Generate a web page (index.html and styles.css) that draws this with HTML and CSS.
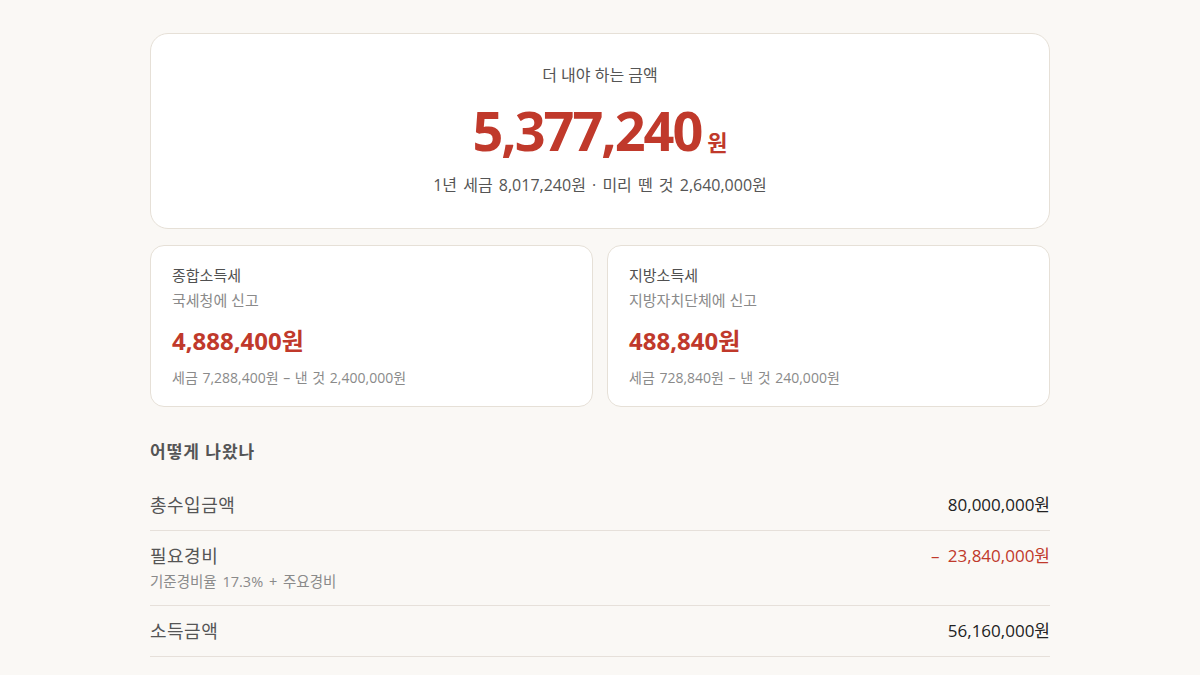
FILE: index.html
```html
<!DOCTYPE html>
<html lang="ko">
<head>
<meta charset="utf-8">
<link rel="stylesheet" href="styles.css">
</head>
<body>
<main class="page">
  <section class="hero">
    <div class="hero-label">더 내야 하는 금액</div>
    <div class="hero-amount"><span class="hero-num">5,377,240</span><span class="hero-unit">원</span></div>
    <div class="hero-sub">1년 세금 8,017,240원 · 미리 뗀 것 2,640,000원</div>
  </section>

  <section class="cards">
    <div class="card">
      <div class="card-title">종합소득세</div>
      <div class="card-sub">국세청에 신고</div>
      <div class="card-amount">4,888,400원</div>
      <div class="card-detail">세금 7,288,400원 – 낸 것 2,400,000원</div>
    </div>
    <div class="card">
      <div class="card-title">지방소득세</div>
      <div class="card-sub">지방자치단체에 신고</div>
      <div class="card-amount">488,840원</div>
      <div class="card-detail">세금 728,840원 – 낸 것 240,000원</div>
    </div>
  </section>

  <h2 class="section-title">어떻게 나왔나</h2>
  <ul class="rows">
    <li class="row">
      <div class="row-left"><div class="row-label">총수입금액</div></div>
      <div class="row-value">80,000,000원</div>
    </li>
    <li class="row">
      <div class="row-left">
        <div class="row-label">필요경비</div>
        <div class="row-note">기준경비율 17.3% + 주요경비</div>
      </div>
      <div class="row-value minus">– 23,840,000원</div>
    </li>
    <li class="row">
      <div class="row-left"><div class="row-label">소득금액</div></div>
      <div class="row-value">56,160,000원</div>
    </li>
  </ul>
</main>
</body>
</html>
```

FILE: styles.css
```css
* { box-sizing: border-box; }
html, body { margin: 0; padding: 0; }
body {
  background: #faf8f5;
  font-family: "Open Sans", "Noto Sans CJK KR", sans-serif;
  color: #444;
}
.page {
  width: 900px;
  margin: 0 auto;
  padding-top: 33px;
}
.hero {
  background: #fff;
  border: 1px solid #e6e0d7;
  border-radius: 18px;
  padding: 30px 20px 32px;
  text-align: center;
}
.hero-label {
  font-size: 16px;
  line-height: 22px;
  color: #555;
}
.hero-amount {
  margin-top: 11px;
  height: 67px;
  display: flex;
  justify-content: center;
  align-items: baseline;
  color: #c0392b;
  font-weight: 700;
}
.hero-num {
  font-size: 54px;
  line-height: 67px;
  letter-spacing: -2px;
}
.hero-unit {
  font-size: 22px;
  line-height: 1;
  margin-left: 6px;
}
.hero-sub {
  margin-top: 10px;
  font-size: 16px;
  line-height: 22px;
  word-spacing: 2px;
  color: #555;
}
.cards {
  margin-top: 16px;
  display: grid;
  grid-template-columns: 1fr 1fr;
  gap: 14px;
}
.card {
  background: #fff;
  border: 1px solid #e6e0d7;
  border-radius: 14px;
  padding: 18px 21px 18px;
}
.card-title {
  font-size: 15px;
  line-height: 22px;
  color: #505050;
  font-weight: 400;
}
.card-sub {
  margin-top: 3px;
  font-size: 15px;
  line-height: 22px;
  color: #8a8a8a;
}
.card-amount {
  margin-top: 14px;
  font-size: 24px;
  line-height: 32px;
  font-weight: 700;
  color: #c0392b;
}
.card-detail {
  margin-top: 11px;
  font-size: 14px;
  line-height: 20px;
  word-spacing: 1px;
  color: #8a8a8a;
}
.section-title {
  margin: 33px 0 0;
  font-size: 17px;
  line-height: 24px;
  letter-spacing: 1px;
  font-weight: 700;
  color: #555;
}
.rows {
  list-style: none;
  margin: 16px 0 0;
  padding: 0;
}
.row {
  display: flex;
  justify-content: space-between;
  align-items: flex-start;
  padding: 13px 0;
  border-bottom: 1px solid #e6e0da;
}
.row-label {
  font-size: 18px;
  line-height: 24px;
  letter-spacing: 0.5px;
  color: #555;
}
.row-note {
  margin-top: 4px;
  font-size: 14.5px;
  line-height: 20px;
  word-spacing: 2px;
  color: #8a8a8a;
}
.row-value {
  font-size: 17px;
  line-height: 24px;
  color: #222;
}
.row-value.minus {
  color: #c0392b;
  word-spacing: 4px;
}
```
